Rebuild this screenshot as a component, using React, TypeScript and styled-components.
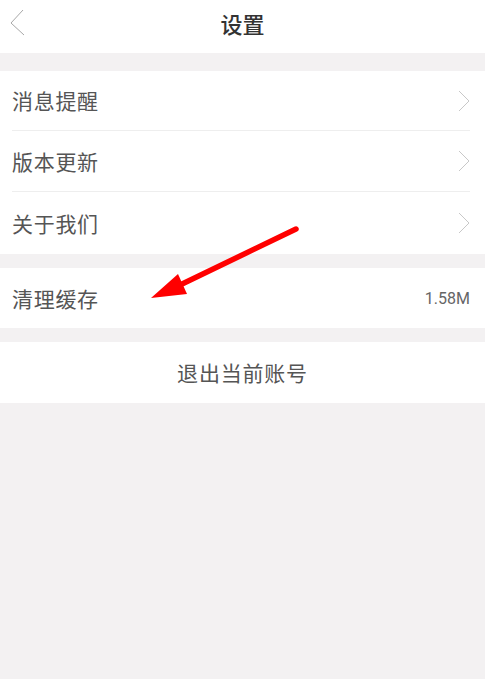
import React from "react";
import styled, { createGlobalStyle } from "styled-components";

const Global = createGlobalStyle`
  html, body { margin: 0; padding: 0; background: #f3f1f2; }
  body { font-family: "Noto Sans CJK SC", "Noto Sans", sans-serif; }
`;

const Page = styled.div`
  position: relative;
  width: 485px;
  min-height: 679px;
  background: #f3f1f2;
  display: flex;
  flex-direction: column;
`;

const Header = styled.header`
  height: 53px;
  background: #fff;
  display: flex;
  align-items: center;
  justify-content: center;
  position: relative;
`;

const Title = styled.h1`
  margin: 0;
  font-size: 22px;
  font-weight: 500;
  color: #333;
  line-height: 1;
  margin-top: -8px;
`;

const BackBtn = styled.div`
  position: absolute;
  left: 8px;
  top: 8px;
  width: 20px;
  height: 30px;
  display: flex;
`;

const Group = styled.section<{ $gap: number }>`
  margin-top: ${(p) => p.$gap}px;
  background: #fff;
  display: flex;
  flex-direction: column;
`;

const Row = styled.div<{ $h: number; $divider?: boolean }>`
  height: ${(p) => p.$h}px;
  margin: 0 15px 0 12px;
  display: flex;
  align-items: center;
  justify-content: space-between;
  border-bottom: ${(p) => (p.$divider ? "1px solid #eeeeee" : "none")};
  box-sizing: border-box;
`;

const Label = styled.span`
  font-size: 21px;
  letter-spacing: 0.7px;
  color: #555;
  line-height: 1;
`;

const Value = styled.span`
  font-family: Roboto, "Noto Sans", sans-serif;
  font-size: 16px;
  color: #666;
`;

const Logout = styled.div`
  height: 61px;
  display: flex;
  align-items: center;
  justify-content: center;
  font-size: 21px;
  letter-spacing: 0.8px;
  color: #555;
  line-height: 1;
`;

const ArrowLayer = styled.svg`
  position: absolute;
  left: 0;
  top: 0;
  pointer-events: none;
`;

const Chevron = () => (
  <svg width="12" height="22" viewBox="0 0 12 22">
    <polyline points="1,1 11,11 1,21" fill="none" stroke="#c8c8c8" strokeWidth="1" />
  </svg>
);

export default function App() {
  return (
    <Page>
      <Global />
      <Header>
        <BackBtn>
          <svg width="20" height="30" viewBox="0 0 20 30">
            <polyline points="15,2 3,15 16,27" fill="none" stroke="#a8a8a8" strokeWidth="1" />
          </svg>
        </BackBtn>
        <Title>设置</Title>
      </Header>
      <Group $gap={18}>
        <Row $h={60} $divider>
          <Label>消息提醒</Label>
          <Chevron />
        </Row>
        <Row $h={61} $divider>
          <Label>版本更新</Label>
          <Chevron />
        </Row>
        <Row $h={62}>
          <Label>关于我们</Label>
          <Chevron />
        </Row>
      </Group>
      <Group $gap={14}>
        <Row $h={60}>
          <Label>清理缓存</Label>
          <Value>1.58M</Value>
        </Row>
      </Group>
      <Group $gap={14}>
        <Logout>退出当前账号</Logout>
      </Group>
      <ArrowLayer width="485" height="679" viewBox="0 0 485 679">
        <line x1="296" y1="229" x2="180" y2="285" stroke="#ff0000" strokeWidth="5.5" strokeLinecap="round" />
        <polygon points="151,298 178,274 187,294" fill="#ff0000" />
      </ArrowLayer>
    </Page>
  );
}
